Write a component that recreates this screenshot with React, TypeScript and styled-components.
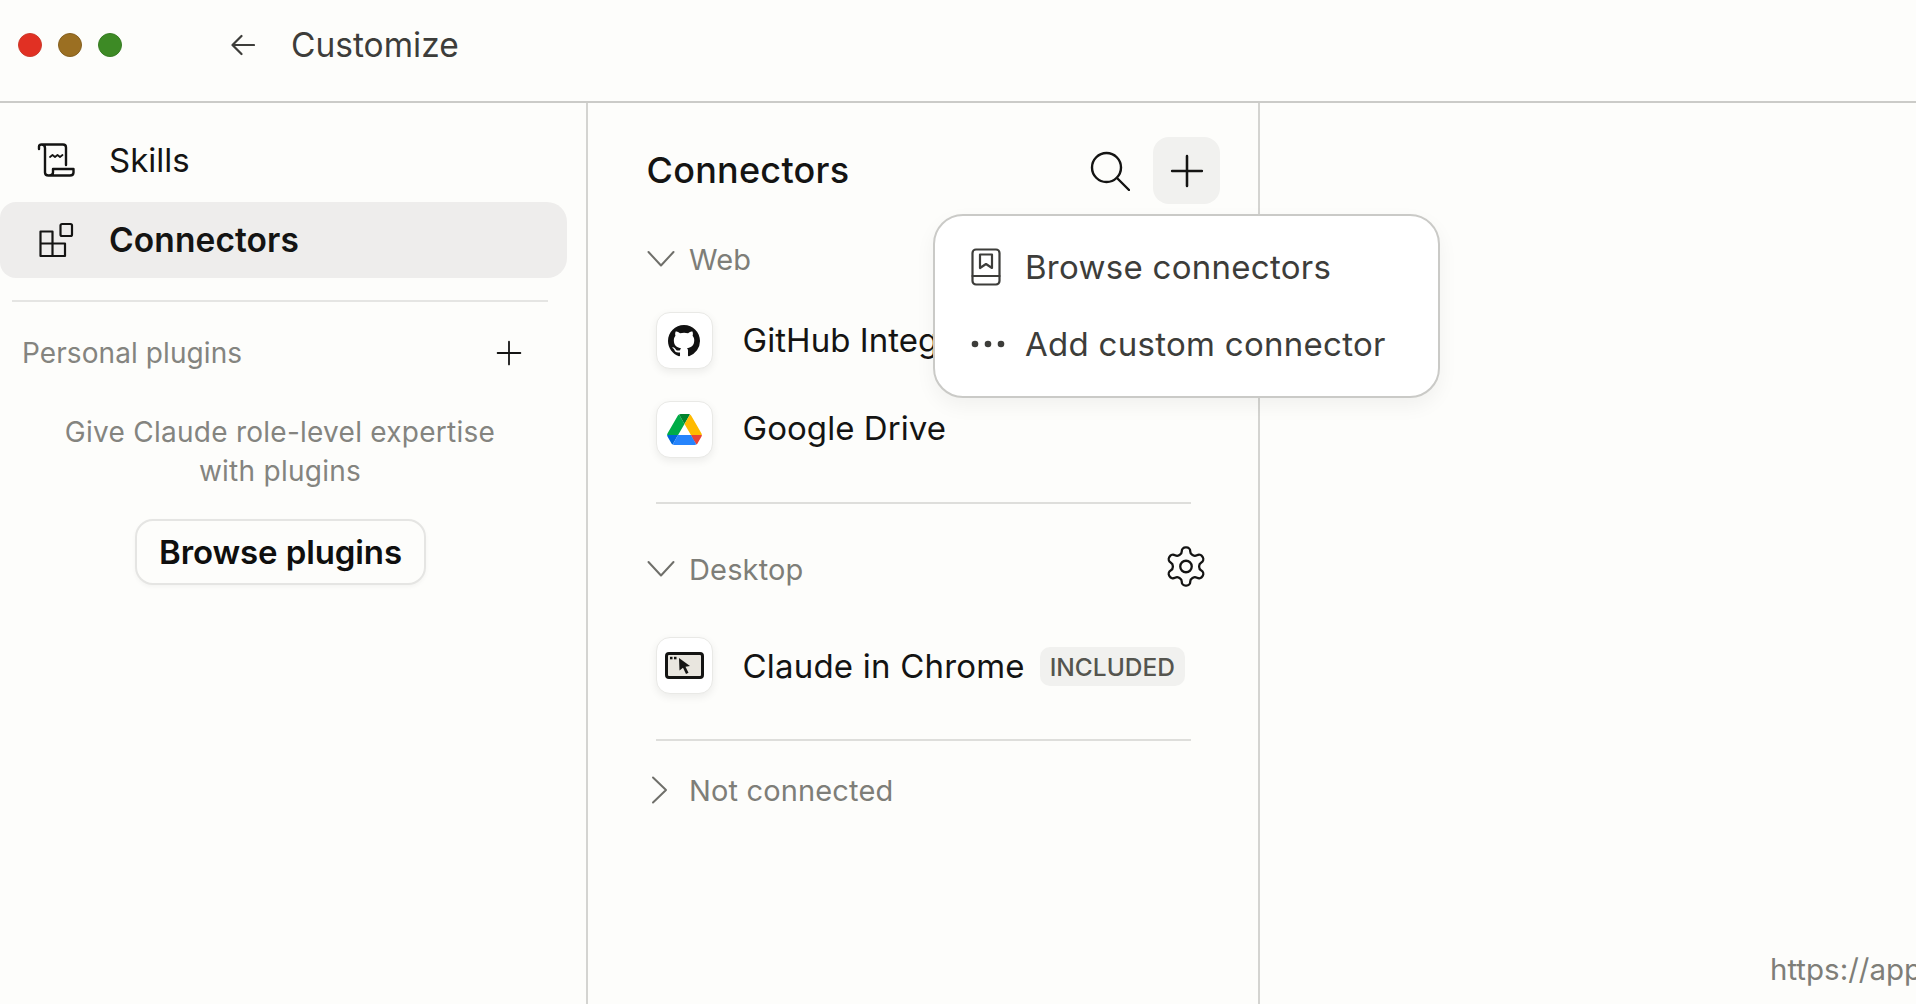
import React from "react";
import styled, { createGlobalStyle } from "styled-components";

const Global = createGlobalStyle`
  html, body { margin: 0; height: 100%; background: #fdfdfb; }
  body { font-family: Inter, "Liberation Sans", sans-serif; color: #141413; overflow: hidden; }
  * { box-sizing: border-box; }
`;
const Page = styled.div`
  position: relative; width: 1916px; height: 1004px; overflow: hidden;
  display: flex; flex-direction: column; background: #fdfdfb;
`;
const TitleBar = styled.header`
  height: 103px; flex: none; display: flex; align-items: center;
  padding: 0 0 12px 18px; border-bottom: 2px solid #cbcbc8;
`;
const Lights = styled.div`display: flex; gap: 16px; margin-right: 109px;`;
const Light = styled.span<{ $c: string; $b: string }>`
  width: 24px; height: 24px; border-radius: 50%; background: ${p => p.$c}; border: 1.5px solid ${p => p.$b};
`;
const PageTitle = styled.h1`
  margin: 0 0 0 36px; font-size: 33.5px; font-weight: 400; color: #3d3d3a; letter-spacing: 0;
`;
const Body = styled.div`flex: 1; display: flex; min-height: 0;`;
const Sidebar = styled.aside`
  width: 588px; flex: none; padding-top: 19px; border-right: 2px solid #d4d4d1;
  display: flex; flex-direction: column;
`;
const NavItem = styled.div<{ $active?: boolean }>`
  width: 567px; height: 76px; display: flex; align-items: center; gap: 34px; padding-left: 37px;
  border-radius: 16px 20px 20px 16px; margin-bottom: 4px;
  font-size: ${p => (p.$active ? "33.5px" : "33px")};
  font-weight: ${p => (p.$active ? 600 : 400)};
  letter-spacing: ${p => (p.$active ? "0.1px" : "0")};
  background: ${p => (p.$active ? "#eeedec" : "transparent")};
`;
const SideRule = styled.hr`
  margin: 18px 0 0 12px; width: 536px; border: 0; height: 2px; background: #e5e5e3; flex: none;
`;
const PluginHead = styled.div`
  height: 40px; margin-top: 31px; display: flex; align-items: center; justify-content: space-between;
  padding: 0 65px 0 22px; width: 587px; font-size: 28px; color: #84847f; letter-spacing: 0.08px;
`;
const PluginPlus = styled.span`display: flex; color: #141413;`;
const Blurb = styled.p`
  margin: 40px 0 0; width: 560px; text-align: center; font-size: 28px; line-height: 39px; color: #84847f; letter-spacing: 0.26px;
`;
const BrowseButton = styled.button`
  display: block; margin: 28px 0 0 135px; width: 291px; height: 66px; border: 2px solid #e5e5e3; border-radius: 18px;
  background: #fdfdfb; box-shadow: 0 2px 4px rgba(0,0,0,.04); font: 600 33px Inter, sans-serif; color: #0f0f0e; letter-spacing: -0.1px; padding: 0;
`;
const Middle = styled.section`
  width: 672px; flex: none; padding: 34px 38px 0 58.5px; border-right: 2px solid #d4d4d1;
  display: flex; flex-direction: column;
`;
const MiddleHead = styled.div`display: flex; align-items: center; justify-content: space-between; height: 67px;`;
const MiddleTitle = styled.h2`margin: 0 0 2px; font-size: 36px; font-weight: 500; letter-spacing: 0.25px; color: #141413;`;
const Actions = styled.div`position: relative; display: flex; align-items: center; gap: 23px;`;
const IconButton = styled.div<{ $active?: boolean }>`
  width: 67px; height: 67px; border-radius: 16px; display: flex; align-items: center; justify-content: center;
  background: ${p => (p.$active ? "#f1f1ef" : "transparent")};
`;
const Popup = styled.div`
  position: absolute; top: 77px; right: -220px; width: 507px; height: 184px; z-index: 5;
  background: #fff; border: 2px solid #cacac7; border-radius: 30px; padding: 12px 0 0 36px;
  box-shadow: 0 8px 20px rgba(0,0,0,.05);
`;
const PopupItem = styled.div`
  height: 77px; display: flex; align-items: center; font-size: 33px; color: #3d3d3a; letter-spacing: 0.28px;
`;
const PopupIcon = styled.span`width: 54px; flex: none; display: flex; align-items: center;`;
const Group = styled.div<{ $top: number; $pad?: number }>`
  height: 40px; margin-top: ${p => p.$top}px; padding-right: ${p => p.$pad ?? 0}px;
  display: flex; align-items: center; font-size: 29px; color: #7e7e78; letter-spacing: 0.15px;
`;
const Chevron = styled.span`width: 41px; flex: none; margin-right: 1.5px; display: flex; align-items: center;`;
const Spacer = styled.span`flex: 1;`;
const GearSlot = styled.span`display: flex; margin-bottom: 5px;`;
const Row = styled.div<{ $top: number }>`
  margin-top: ${p => p.$top}px; padding-left: 9px; display: flex; align-items: center; font-size: 33px; white-space: nowrap; letter-spacing: 0.05px;
`;
const RowName = styled.span<{ $lift?: number; $wide?: boolean }>`
  margin-bottom: ${p => p.$lift ?? 0}px;
  letter-spacing: ${p => (p.$wide ? "0.2px" : "inherit")};
`;
const Tile = styled.span`
  width: 57px; height: 57px; flex: none; margin-right: 30px; display: flex; align-items: center; justify-content: center;
  background: #fff; border: 1.5px solid #e9e9e6; border-radius: 14px; box-shadow: 0 3px 8px rgba(0,0,0,.07);
`;
const Badge = styled.span`
  margin-left: 15px; margin-top: 2px; padding-top: 1px; height: 39px; width: 145px; flex: none; display: flex; align-items: center; justify-content: center;
  background: #f1f1ef; border-radius: 10px; font-size: 24.5px; font-weight: 500; color: #55554f; letter-spacing: 0;
`;
const Rule = styled.hr<{ $top: number }>`
  margin: ${p => p.$top}px 0 0 9px; width: 535px; height: 2px; border: 0; flex: none; background: #dededb;
`;
const RightPane = styled.main`flex: 1;`;
const StatusUrl = styled.div`
  position: absolute; left: 1770px; top: 950px; font-size: 29.5px; line-height: 38px; color: #7e7e78; white-space: nowrap;
`;

const Stroke = { fill: "none", stroke: "currentColor", strokeLinecap: "round", strokeLinejoin: "round" } as const;

const Plus = ({ s, w = 2.4 }: { s: number; w?: number }) => (
  <svg width={s} height={s} viewBox="0 0 32 32" {...Stroke} strokeWidth={w}><path d="M16 2v28M2 16h28" /></svg>
);
const Down = () => (
  <svg width="28" height="18" viewBox="0 0 28 18" {...Stroke} strokeWidth="2" color="#6f6f6a"><path d="M1.5 2 14 15.5 26.5 2" /></svg>
);
const Right = () => (
  <svg width="28" height="28" viewBox="0 0 28 28" {...Stroke} strokeWidth="2" color="#6f6f6a"><path d="M6 1.5 19 14 6 26.5" /></svg>
);

export default function App() {
  return (
    <Page>
      <Global />
      <TitleBar>
        <Lights>
          <Light $c="#e13023" $b="#cc3a2b" />
          <Light $c="#9b6f22" $b="#85601f" />
          <Light $c="#3d8a25" $b="#377c23" />
        </Lights>
        <svg width="24" height="22" viewBox="0 0 24 22" {...Stroke} strokeWidth="2.2" color="#3d3d3a"><path d="M23 11H2M10.5 2 1.5 11l9 9" /></svg>
        <PageTitle>Customize</PageTitle>
      </TitleBar>
      <Body>
        <Sidebar>
          <NavItem>
            <svg width="38" height="34" viewBox="0 0 38 34" {...Stroke} strokeWidth="2.4" style={{ flex: "none" }}>
              <path d="M2 6V3.5C2 2 3 1.5 4.500 1.500H26c2 0 3 1 3 3V22M4.500 1.500C7 1.500 8 3 8 5v24.500c0 2 1.500 3 3.500 3H33c2.500 0 3.500-1.500 3.500-3V26H16v3.500c0 2-1.500 3-4 3" />
              <path d="M13 14l2.500-2 2.500 2 2.500-2 2.500 2 2.500-2" strokeWidth="1.800" />
            </svg>
            Skills
          </NavItem>
          <NavItem $active>
            <svg width="38" height="36" viewBox="0 0 38 36" {...Stroke} strokeWidth="2.2" style={{ flex: "none" }}>
              <path d="M3.500 9.500h12v12h12.500v12.500H3.500zM3.500 21.500h12M15.500 21.500V34" />
              <rect x="23.500" y="2" width="11.500" height="12" rx="1.500" />
            </svg>
            Connectors
          </NavItem>
          <SideRule />
          <PluginHead>
            Personal plugins
            <PluginPlus><Plus s={26} w={2.2} /></PluginPlus>
          </PluginHead>
          <Blurb>Give Claude role-level expertise<br />with plugins</Blurb>
          <BrowseButton>Browse plugins</BrowseButton>
        </Sidebar>
        <Middle>
          <MiddleHead>
            <MiddleTitle>Connectors</MiddleTitle>
            <Actions>
              <svg width="40" height="40" viewBox="0 0 40 40" {...Stroke} strokeWidth="2.400">
                <circle cx="16.500" cy="16.500" r="14.500" />
                <path d="M27 27l12 12" />
              </svg>
              <IconButton $active><Plus s={34} w={2.4} /></IconButton>
              <Popup>
                <PopupItem>
                  <PopupIcon>
                    <svg width="30" height="38" viewBox="0 0 30 38" {...Stroke} strokeWidth="2.200" color="#3d3d3a">
                      <rect x="1.500" y="1.500" width="27" height="35" rx="3.500" />
                      <path d="M1.500 28h27M9 6.500h12v13.500l-6-4-6 4z" />
                    </svg>
                  </PopupIcon>
                  Browse connectors
                </PopupItem>
                <PopupItem>
                  <PopupIcon>
                    <svg width="34" height="8" viewBox="0 0 34 8" fill="#3d3d3a">
                      <circle cx="4" cy="4" r="3.300" /><circle cx="17" cy="4" r="3.300" /><circle cx="30" cy="4" r="3.300" />
                    </svg>
                  </PopupIcon>
                  Add custom connector
                </PopupItem>
              </Popup>
            </Actions>
          </MiddleHead>
          <Group $top={35}><Chevron><Down /></Chevron>Web</Group>
          <Row $top={33}>
            <Tile>
              <svg width="32" height="32" viewBox="0 0 16 16" fill="#111">
                <path d="M8 0C3.580 0 0 3.580 0 8c0 3.540 2.290 6.530 5.470 7.590.4.070.55-.17.55-.38 0-.19-.01-.82-.01-1.490-2.010.37-2.530-.49-2.690-.94-.09-.23-.48-.94-.82-1.130-.28-.15-.68-.52-.01-.53.63-.01 1.080.58 1.230.82.720 1.210 1.870.870 2.330.66.070-.52.28-.87.51-1.070-1.780-.2-3.640-.89-3.640-3.950 0-.87.31-1.590.82-2.150-.08-.2-.36-1.020.08-2.120 0 0 .67-.21 2.200.82.640-.18 1.320-.27 2-.27.68 0 1.360.09 2 .27 1.530-1.040 2.200-.82 2.200-.82.44 1.100.16 1.920.08 2.120.51.56.82 1.270.82 2.150 0 3.070-1.870 3.750-3.650 3.950.29.25.54.73.54 1.480 0 1.070-.01 1.930-.01 2.200 0 .21.15.46.55.38A8.013 8.013 0 0016 8c0-4.420-3.580-8-8-8z" />
              </svg>
            </Tile>
            <RowName $lift={2}>GitHub Integration</RowName>
          </Row>
          <Row $top={32}>
            <Tile>
              <svg width="35" height="31" viewBox="0 0 87.300 78">
                <path d="m6.600 66.850 3.850 6.650c.8 1.400 1.950 2.500 3.300 3.300l13.750-23.800h-27.500c0 1.550.4 3.100 1.200 4.500z" fill="#0066da" />
                <path d="m43.650 25-13.750-23.800c-1.350.8-2.500 1.900-3.300 3.300l-25.400 44a9.060 9.060 0 0 0 -1.200 4.500h27.500z" fill="#00ac47" />
                <path d="m73.550 76.800c1.350-.8 2.500-1.900 3.300-3.300l1.600-2.750 7.650-13.250c.8-1.400 1.200-2.950 1.200-4.500h-27.502l5.852 11.500z" fill="#ea4335" />
                <path d="m43.650 25 13.750-23.800c-1.350-.8-2.900-1.200-4.500-1.200h-18.500c-1.600 0-3.150.45-4.500 1.200z" fill="#00832d" />
                <path d="m59.800 53h-32.300l-13.750 23.800c1.350.8 2.900 1.200 4.500 1.200h50.800c1.600 0 3.150-.45 4.500-1.200z" fill="#2684fc" />
                <path d="m73.400 26.500-12.700-22c-.8-1.400-1.950-2.500-3.300-3.300l-13.750 23.800 16.150 28h27.450c0-1.550-.4-3.100-1.200-4.500z" fill="#ffba00" />
              </svg>
            </Tile>
            <RowName $lift={3}>Google Drive</RowName>
          </Row>
          <Rule $top={44} />
          <Group $top={45} $pad={11.5}>
            <Chevron><Down /></Chevron>Desktop<Spacer />
            <GearSlot>
              <svg width="46" height="47" viewBox="0 0 24 24" {...Stroke} strokeWidth="1.200" color="#141413">
                <path d="M12.220 2h-.44a2 2 0 0 0-2 2v.180a2 2 0 0 1-1 1.730l-.43.250a2 2 0 0 1-2 0l-.15-.08a2 2 0 0 0-2.730.73l-.22.380a2 2 0 0 0 .73 2.730l.15.100a2 2 0 0 1 1 1.720v.510a2 2 0 0 1-1 1.740l-.15.090a2 2 0 0 0-.73 2.730l.22.380a2 2 0 0 0 2.730.73l.15-.08a2 2 0 0 1 2 0l.43.250a2 2 0 0 1 1 1.730V20a2 2 0 0 0 2 2h.44a2 2 0 0 0 2-2v-.180a2 2 0 0 1 1-1.730l.43-.25a2 2 0 0 1 2 0l.15.080a2 2 0 0 0 2.730-.73l.22-.39a2 2 0 0 0-.73-2.730l-.15-.08a2 2 0 0 1-1-1.740v-.5a2 2 0 0 1 1-1.740l.15-.09a2 2 0 0 0 .73-2.730l-.22-.38a2 2 0 0 0-2.730-.73l-.15.080a2 2 0 0 1-2 0l-.43-.25a2 2 0 0 1-1-1.730V4a2 2 0 0 0-2-2z" />
                <circle cx="12" cy="12" r="3" />
              </svg>
            </GearSlot>
          </Group>
          <Row $top={48}>
            <Tile>
              <svg width="39" height="27" viewBox="0 0 39 27">
                <rect x="1.500" y="1.500" width="36" height="24" rx="2.500" fill="#e9e6df" stroke="#141413" strokeWidth="3" />
                <rect x="5" y="4.800" width="2.500" height="2.500" fill="#141413" />
                <rect x="9" y="4.800" width="2.500" height="2.500" fill="#141413" />
                <path d="M14 6l11 8-4.500.8 3 6-2.500 1.200-3-6.200-3.500 2.800z" fill="#141413" />
              </svg>
            </Tile>
            <RowName $wide>Claude in Chrome</RowName>
            <Badge>INCLUDED</Badge>
          </Row>
          <Rule $top={45} />
          <Group $top={29}><Chevron><Right /></Chevron>Not connected</Group>
        </Middle>
        <RightPane />
      </Body>
      <StatusUrl>https://app</StatusUrl>
    </Page>
  );
}
